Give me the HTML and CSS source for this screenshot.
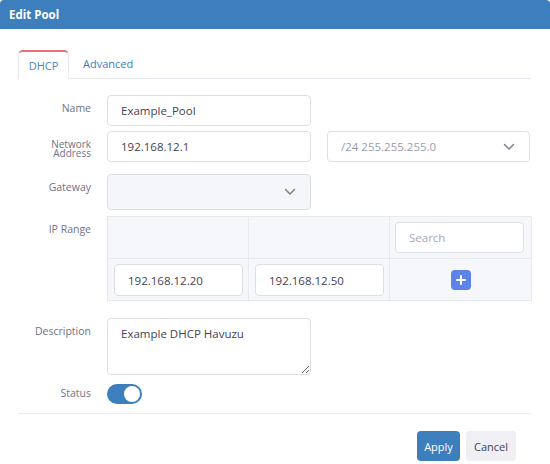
FILE: index.html
```html
<!DOCTYPE html>
<html>
<head>
<meta charset="utf-8">
<link rel="stylesheet" href="styles.css">
</head>
<body>
<div class="modal">
  <div class="header">Edit Pool</div>
  <div class="content">
    <div class="tabs">
      <div class="tab active">DHCP</div>
      <div class="tab">Advanced</div>
    </div>

    <div class="row row-name">
      <label class="lbl">Name</label>
      <div class="field"><input class="inp w204" type="text" value="Example_Pool"></div>
    </div>

    <div class="row row-net">
      <label class="lbl lbl-two"><span class="ln">Network</span><span class="ln">Address</span></label>
      <div class="field net">
        <input class="inp w204" type="text" value="192.168.12.1">
        <div class="select mask">
          <span class="sel-text">/24 255.255.255.0</span>
          <svg class="chev" width="12" height="8" viewBox="0 0 12 8"><path d="M1.5 1.5 6 6l4.5-4.5" fill="none" stroke="#7e8190" stroke-width="1.5" stroke-linecap="round" stroke-linejoin="round"/></svg>
        </div>
      </div>
    </div>

    <div class="row row-gw">
      <label class="lbl">Gateway</label>
      <div class="field">
        <div class="select gw">
          <span class="sel-text"></span>
          <svg class="chev" width="12" height="8" viewBox="0 0 12 8"><path d="M1.5 1.5 6 6l4.5-4.5" fill="none" stroke="#7e8190" stroke-width="1.5" stroke-linecap="round" stroke-linejoin="round"/></svg>
        </div>
      </div>
    </div>

    <div class="row row-ip">
      <label class="lbl">IP Range</label>
      <div class="field">
        <div class="iptable">
          <div class="cell"></div>
          <div class="cell"></div>
          <div class="cell search-cell"><input class="inp search" type="text" placeholder="Search"></div>
          <div class="cell"><input class="inp ip" type="text" value="192.168.12.20"></div>
          <div class="cell"><input class="inp ip" type="text" value="192.168.12.50"></div>
          <div class="cell plus-cell">
            <button class="plus" type="button">
              <svg width="10" height="10" viewBox="0 0 10 10"><path d="M5 1v8M1 5h8" stroke="#fff" stroke-width="2" stroke-linecap="round"/></svg>
            </button>
          </div>
        </div>
      </div>
    </div>

    <div class="row row-desc">
      <label class="lbl">Description</label>
      <div class="field"><textarea class="inp area">Example DHCP Havuzu</textarea></div>
    </div>

    <div class="row row-status">
      <label class="lbl lbl-status">Status</label>
      <div class="field"><span class="toggle"><span class="knob"></span></span></div>
    </div>

    <div class="divider"></div>

    <div class="actions">
      <button class="btn apply" type="button">Apply</button>
      <button class="btn cancel" type="button">Cancel</button>
    </div>
  </div>
</div>
</body>
</html>
```

FILE: styles.css
```css
* { box-sizing: border-box; }
html, body { margin: 0; padding: 0; background: #fff; }
body {
  font-family: "Open Sans", "DejaVu Sans", sans-serif;
  color: #3f4254;
  width: 550px;
  height: 464px;
  overflow: hidden;
}
.modal { width: 550px; height: 464px; background: #fff; }
.header {
  height: 29px;
  background: #3d7ebd;
  color: #fff;
  font-size: 11.5px;
  font-weight: 700;
  padding-left: 9px;
  line-height: 29px;
  border-radius: 4px 4px 0 0;
}
.content { padding: 0 19px 0 18px; }
.tabs {
  margin-top: 21px;
  display: flex;
  border-bottom: 1px solid #e6e8ee;
  height: 29px;
}
.tab {
  height: 29px;
  font-size: 11px;
  color: #3d7ebd;
  padding: 0 13px;
  line-height: 25px;
  border: 1px solid transparent;
}
.tab.active {
  width: 51px;
  padding: 0;
  text-align: center;
  color: #4a86c5;
  border: 1px solid #e6e8ee;
  border-top: 2px solid #e9707a;
  border-bottom: 1px solid #fff;
  border-radius: 5px 5px 0 0;
  background: #fff;
  margin-bottom: -1px;
  height: 29px;
  line-height: 27px;
}
.row {
  display: grid;
  grid-template-columns: 73px 1fr;
  column-gap: 16px;
  align-items: start;
}
.lbl {
  font-size: 10.5px;
  color: #6f7287;
  text-align: right;
  line-height: 13px;
  padding-top: 7px;
}
.lbl-two { padding-top: 9px; font-size: 10px; }
.lbl-two .ln { display: block; height: 9px; line-height: 9px; }
.lbl-status { padding-top: 3px; }
.row-name { margin-top: 16px; }
.row-net { margin-top: 5px; }
.row-gw { margin-top: 12px; }
.row-ip { margin-top: 6px; }
.row-desc { margin-top: 17px; }
.row-status { margin-top: 9px; }

.inp {
  font-family: inherit;
  font-size: 11.5px;
  font-weight: 500;
  color: #3f4254;
  border: 1px solid #dcdfe6;
  border-radius: 4px;
  background: #fff;
  padding: 0 13px;
  outline: none;
  display: block;
}
.w204 { width: 204px; height: 31px; }
.net { display: flex; gap: 16px; }
.select {
  position: relative;
  border: 1px solid #dcdfe6;
  border-radius: 4px;
  display: flex;
  align-items: center;
  padding: 0 13px;
}
.select.mask { width: 203px; height: 31px; }
.select.gw { width: 204px; height: 36px; background: #f4f6f9; }
.sel-text { font-size: 11.5px; color: #9a9cae; flex: 1; }
.chev { flex: none; margin-right: 1px; }

.iptable {
  width: 424px;
  display: grid;
  grid-template-columns: 141px 141px 142px;
  grid-template-rows: 42px 42px;
  background: #f5f7fa;
  border-top: 1px solid #e6e9ee;
  border-left: 1px solid #e6e9ee;
}
.cell {
  border-right: 1px solid #e6e9ee;
  border-bottom: 1px solid #e6e9ee;
  padding: 5px 5px 0 6px;
}
.search-cell { padding: 5px 6px 0 5px; }
.search { width: 129px; height: 31px; }
.search::placeholder { color: #a6a9ba; font-weight: 500; }
.ip { width: 129px; height: 32px; }
.plus-cell { display: flex; justify-content: center; padding: 11px 0 0 0; }
.plus {
  width: 20px;
  height: 20px;
  border: none;
  border-radius: 4px;
  background: #5b83e8;
  padding: 0;
  display: flex;
  align-items: center;
  justify-content: center;
}
.area {
  width: 204px;
  height: 57px;
  padding: 7px 13px;
  line-height: 16px;
  resize: vertical;
}
.toggle {
  display: block;
  width: 35px;
  height: 20px;
  border-radius: 10px;
  background: #3d7ebd;
  position: relative;
}
.knob {
  position: absolute;
  right: 2px;
  top: 2px;
  width: 16px;
  height: 16px;
  border-radius: 50%;
  background: #fff;
}
.divider {
  margin-top: 9px;
  height: 1px;
  background: #ebedf2;
}
.actions {
  display: flex;
  justify-content: flex-end;
  gap: 6px;
  margin-top: 17px;
  padding-right: 15px;
}
.btn {
  font-family: inherit;
  font-size: 11px;
  font-weight: 500;
  height: 30px;
  border: none;
  border-radius: 4px;
  padding: 0;
}
.apply { width: 43px; background: #3d7ebd; color: #fff; }
.cancel { width: 50px; background: #efeff4; color: #3f4254; }
```
